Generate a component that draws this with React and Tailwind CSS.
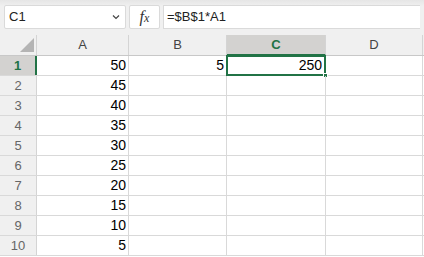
const cols = ["A", "B", "C", "D"];
const colW = ["w-[92px]", "w-[98px]", "w-[99px]", "w-[97px]"];
const values = [50, 45, 40, 35, 30, 25, 20, 15, 10, 5];

function HeaderRow() {
  return (
    <div className="flex h-[21px] border-b border-[#c8c8c8] bg-[#f0f0f0]">
      {/* corner */}
      <div className="relative w-[37px] shrink-0 border-r border-[#d4d4d4]">
        <svg className="absolute bottom-[3px] right-[2px]" width="14" height="14" viewBox="0 0 14 14">
          <polygon points="14,0 14,14 0,14" fill="#b4b4b4" />
        </svg>
      </div>
      {cols.map((c, i) => (
        <div
          key={c}
          className={`${colW[i]} shrink-0 flex items-center justify-center border-r border-[#d4d4d4] text-[13px] ${
            c === "C"
              ? "bg-[#d3d2d0] text-[#217346] font-bold border-b-2 border-b-[#217346] -mb-px"
              : "text-[#444]"
          }`}
        >
          {c}
        </div>
      ))}
      <div className="flex-1" />
    </div>
  );
}

function Row({ n, v }) {
  const first = n === 1;
  return (
    <div className="flex h-[20px] border-b border-[#d9d9d9]">
      <div
        className={`w-[37px] shrink-0 flex items-center justify-center text-[13px] border-r ${
          first
            ? "bg-[#d3d2d0] text-[#217346] font-bold border-r-2 border-r-[#217346]"
            : "bg-[#f0f0f0] text-[#666] border-[#d4d4d4]"
        }`}
      >
        {n}
      </div>
      <div className="w-[92px] shrink-0 border-r border-[#d9d9d9] flex items-center justify-end pr-[2px] text-[14px] text-black">
        {v}
      </div>
      <div className="w-[98px] shrink-0 border-r border-[#d9d9d9] flex items-center justify-end pr-[2px] text-[14px] text-black">
        {first ? 5 : ""}
      </div>
      <div className="relative w-[99px] shrink-0 border-r border-[#d9d9d9] flex items-center justify-end pr-[2px] text-[14px] text-black">
        {first && (
          <>
            <div className="absolute -left-px -top-px -right-px -bottom-px border-2 border-[#217346]" />
            <div className="absolute -right-[3px] -bottom-[3px] h-[5px] w-[5px] bg-[#217346] border border-white" />
            <span className="relative pr-px">250</span>
          </>
        )}
      </div>
      <div className="w-[97px] shrink-0 border-r border-[#d9d9d9]" />
      <div className="flex-1" />
    </div>
  );
}

export default function App() {
  return (
    <div className="w-[424px] h-[257px] overflow-hidden bg-white font-['Liberation_Sans',sans-serif]">
      {/* formula bar */}
      <div className="h-[35px] bg-gradient-to-b from-[#e6e6e6] to-[#f0f0f0] from-0% to-[18%] px-[4px] pt-[5px] flex gap-[3px]">
        <div className="w-[122px] h-[24px] bg-white border border-[#dadada] rounded-[2px] flex items-center justify-between pl-[4px] pr-[5px]">
          <span className="text-[13px] text-[#222]">C1</span>
          <svg width="8" height="6" viewBox="0 0 8 6">
            <path d="M1 1.5 L4 4.5 L7 1.5" fill="none" stroke="#444" strokeWidth="1.2" />
          </svg>
        </div>
        <div className="w-[31px] h-[24px] bg-white border border-[#dadada] rounded-[2px] flex items-center justify-center">
          <span className="font-['Liberation_Serif',serif] italic text-[16px] text-[#333]">
            f<span className="text-[12px]">x</span>
          </span>
        </div>
        <div className="flex-1 h-[24px] bg-white border border-[#dadada] border-r-0 flex items-center pl-[3px]">
          <span className="text-[13px] text-[#222]">=$B$1*A1</span>
        </div>
      </div>
      <HeaderRow />
      {values.map((v, i) => (
        <Row key={i} n={i + 1} v={v} />
      ))}
    </div>
  );
}
